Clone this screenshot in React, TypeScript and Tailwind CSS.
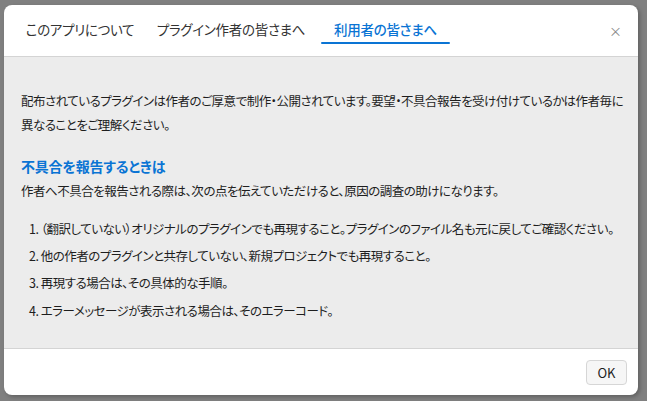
import React, { useState } from 'react';

const tabs = [
    { label: 'このアプリについて', width: 'w-[122px]' },
    { label: 'プラグイン作者の皆さまへ', width: 'w-[166px]' },
    { label: '利用者の皆さまへ', width: 'w-[129px]' },
];

const steps = [
    '1. （翻訳していない）オリジナルのプラグインでも再現すること。プラグインのファイル名も元に戻してご確認ください。',
    '2. 他の作者のプラグインと共存していない、新規プロジェクトでも再現すること。',
    '3. 再現する場合は、その具体的な手順。',
    '4. エラーメッセージが表示される場合は、そのエラーコード。',
];

export default function App() {
    const [activeTab, setActiveTab] = useState(2);

    return (
        <div
            className="w-[647px] h-[401px] bg-[#808080] pl-[4px] pt-[5px] overflow-hidden"
            style={{ fontFamily: '"Noto Sans CJK JP", "Noto Sans", sans-serif', fontFeatureSettings: '"palt"' }}
        >
            {/* Dialog */}
            <div className="w-[634px] h-[390px] bg-white rounded-[8px] flex flex-col overflow-hidden shadow-[2px_2px_4px_rgba(0,0,0,0.25)]">
                {/* Header / Tabs */}
                <div className="h-[52px] shrink-0 flex items-center pl-[15px] pr-[16px] border-b border-[#d4d4d4]">
                    <div className="flex gap-[7px] h-full">
                        {tabs.map((t, i) => (
                            <button
                                key={t.label}
                                onClick={() => setActiveTab(i)}
                                className={`relative h-full ${t.width} text-center text-[13.5px] leading-none tracking-[-0.3px] whitespace-nowrap ${
                                    i === activeTab ? 'text-[#0a74d4] font-medium' : 'text-[#333]'
                                }`}
                            >
                                <span className="block -mt-[2px]">{t.label}</span>
                                {i === activeTab && (
                                    <span className="absolute left-0 right-0 top-[37px] h-[2px] rounded-full bg-[#0a74d4]" />
                                )}
                            </button>
                        ))}
                    </div>
                    <button className="ml-auto -mt-[1px] text-[#888] text-[13px] leading-none">×</button>
                </div>

                {/* Body */}
                <div className="flex-1 min-h-0 overflow-hidden bg-[#ececec] pl-[17px] pr-[10px] pt-[32px] text-[12.5px] leading-[24px] tracking-[-0.5px] text-[#1e1e1e] whitespace-nowrap">
                    <p>
                        配布されているプラグインは作者のご厚意で制作・公開されています。要望・不具合報告を受け付けているかは作者毎に
                        <br />
                        異なることをご理解ください。
                    </p>
                    <h3 className="mt-[17px] text-[14px] tracking-[-0.2px] font-semibold text-[#0a74d4]">不具合を報告するときは</h3>
                    <p className="mt-[1px]">作者へ不具合を報告される際は、次の点を伝えていただけると、原因の調査の助けになります。</p>
                    <ol className="mt-[14px] pl-[8px] flex flex-col gap-[3px]">
                        {steps.map((s, i) => (
                            <li key={s} className={i === 3 ? 'mt-[1px]' : ''}>{s}</li>
                        ))}
                    </ol>
                </div>

                {/* Footer */}
                <div className="h-[47px] shrink-0 border-t border-[#d4d4d4] flex items-center justify-end pr-[11px]">
                    <button className="w-[41px] h-[25px] rounded-[4px] border border-[#d6d6d6] bg-[#f6f6f6] text-[13px] text-[#1e1e1e] leading-none">
                        OK
                    </button>
                </div>
            </div>
        </div>
    );
}
